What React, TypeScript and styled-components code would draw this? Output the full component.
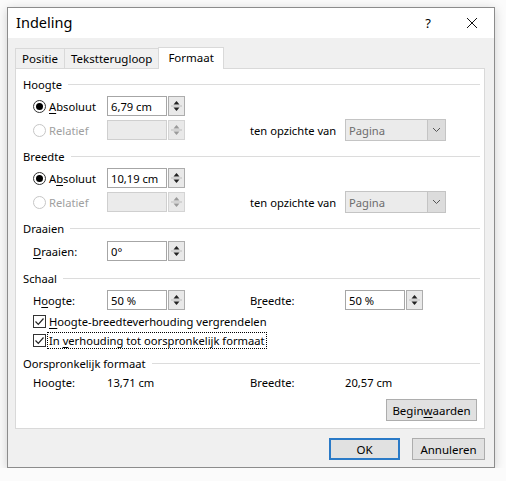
import styled, { createGlobalStyle } from "styled-components";

const Global = createGlobalStyle`
    html, body {
        margin: 0;
        padding: 0;
        background: #fbfbfb;
    }
    #root {
        padding: 7px 0 0 7px;
        font-family: "Noto Sans", "Open Sans", sans-serif;
        font-size: 11.2px;
        color: #000;
    }
`

const Dialog = styled.div`
    width: 486px;
    height: 459px;
    border: 1px solid #8c8c8c;
    background: #f0f0f0;
    display: flex;
    flex-direction: column;
    box-shadow: 0 2px 10px rgba(0,0,0,0.18);
`

const TitleBar = styled.div`
    height: 30px;
    background: #fff;
    display: flex;
    align-items: center;
    padding-left: 8px;
`

const TitleText = styled.div`
    flex: 1;
    font-size: 14.5px;
    padding-bottom: 2px;
`

const TitleButton = styled.div`
    width: 44px;
    height: 30px;
    display: flex;
    align-items: center;
    justify-content: center;
    font-size: 13px;
`

const Body = styled.div`
    flex: 1;
    padding: 7px 9px 0 7px;
    display: flex;
    flex-direction: column;
`

const Tabs = styled.div`
    display: flex;
    align-items: flex-end;
    height: 22px;
    margin-top: 1px;
`

const Tab = styled.div<{ $active?: boolean }>`
    height: ${p => p.$active ? 22 : 20}px;
    box-sizing: border-box;
    padding: 0 ${p => p.$active ? 9 : 6}px;
    border: 1px solid #d9d9d9;
    border-bottom: none;
    margin-right: -1px;
    background: ${p => p.$active ? "#fff" : "#f0f0f0"};
    display: flex;
    align-items: center;
    position: relative;
    z-index: ${p => p.$active ? 2 : 1};
    margin-bottom: ${p => p.$active ? -1 : 0}px;
    padding-bottom: ${p => p.$active ? 2 : 0}px;
    font-size: 11.5px;
`

const Panel = styled.div`
    height: 361px;
    box-sizing: border-box;
    background: #fff;
    border: 1px solid #d9d9d9;
    padding: 5px 4px 0 7px;
    display: flex;
    flex-direction: column;
`

const Group = styled.div<{ $gap?: number }>`
    margin-bottom: ${p => p.$gap ?? 4}px;
`

const Header = styled.div`
    height: 20px;
    display: flex;
    align-items: center;
    &::after {
        content: "";
        flex: 1;
        height: 1px;
        background: #dcdcdc;
        margin-left: 6px;
    }
`

const Row = styled.div<{ $h?: number }>`
    height: ${p => p.$h ?? 24}px;
    display: grid;
    grid-template-columns: 74px 143px 95px 1fr;
    align-items: center;
    padding-left: 10px;
`

const RadioWrap = styled.div<{ $disabled?: boolean }>`
    display: flex;
    align-items: center;
    gap: 3px;
    color: ${p => p.$disabled ? "#a0a0a0" : "#000"};
`

const RadioCircle = styled.span<{ $checked?: boolean; $disabled?: boolean }>`
    width: 13px;
    height: 13px;
    box-sizing: border-box;
    border-radius: 50%;
    border: 1px solid ${p => p.$disabled ? "#c6c6c6" : "#333"};
    display: flex;
    align-items: center;
    justify-content: center;
    &::after {
        content: "";
        width: 7px;
        height: 7px;
        border-radius: 50%;
        background: ${p => p.$checked ? "#000" : "transparent"};
    }
`

const SpinBox = styled.div`
    display: flex;
    gap: 1px;
`

const SpinInput = styled.div<{ $disabled?: boolean }>`
    width: 60px;
    height: 20px;
    box-sizing: border-box;
    border: 1px solid ${p => p.$disabled ? "#cfcfcf" : "#a6a6a6"};
    background: ${p => p.$disabled ? "#ebebeb" : "#fff"};
    padding-left: 3px;
    display: flex;
    align-items: center;
`

const SpinButtons = styled.div<{ $disabled?: boolean }>`
    width: 17px;
    height: 20px;
    box-sizing: border-box;
    border: 1px solid ${p => p.$disabled ? "#d4d4d4" : "#adadad"};
    background: #e9e9e9;
    display: flex;
    flex-direction: column;
    justify-content: center;
    align-items: center;
`

const Select = styled.div`
    width: 101px;
    height: 22px;
    box-sizing: border-box;
    border: 1px solid #c4c4c4;
    background: #ebebeb;
    display: flex;
    align-items: center;
    color: #6d6d6d;
`

const SelectText = styled.div`
    flex: 1;
    padding-left: 3px;
`

const SelectArrow = styled.div`
    width: 17px;
    height: 20px;
    border-left: 1px solid #c4c4c4;
    background: #dcdcdc;
    display: flex;
    align-items: center;
    justify-content: center;
`

const CheckRow = styled.div`
    height: 19px;
    display: flex;
    align-items: center;
    padding-left: 10px;
    gap: 1px;
`

const CheckBox = styled.span`
    width: 13px;
    height: 13px;
    box-sizing: border-box;
    border: 1px solid #333;
    display: flex;
    align-items: center;
    justify-content: center;
    background: #fff;
`

const CheckLabel = styled.span<{ $focus?: boolean }>`
    border: 1px dotted ${p => p.$focus ? "#000" : "transparent"};
    padding: 0 1px;
    line-height: 15px;
`

const U = styled.span`
    text-decoration: underline;
    text-underline-offset: 2px;
`

const ButtonRow = styled.div<{ $pad?: number; $top?: number }>`
    display: flex;
    justify-content: flex-end;
    gap: 12px;
    padding-right: ${p => p.$pad ?? 0}px;
    margin-top: ${p => p.$top ?? 0}px;
`

const Button = styled.div<{ $primary?: boolean; $w: number }>`
    width: ${p => p.$w}px;
    height: 22px;
    box-sizing: border-box;
    border: ${p => p.$primary ? "2px solid #2a7ac7" : "1px solid #adadad"};
    background: #e1e1e1;
    display: flex;
    align-items: center;
    justify-content: center;
    font-size: 11.5px;
`

const Spinner = ({ disabled }: { disabled?: boolean }) => {
    const c = disabled ? "#9a9a9a" : "#222";
    return (
        <SpinButtons $disabled={disabled}>
            <svg width="15" height="18" viewBox="0 0 15 18">
                <path d="M7.5 4 L10.5 7.5 L4.5 7.5 Z" fill={c} />
                <line x1="2" y1="9" x2="13" y2="9" stroke="#bdbdbd" strokeWidth="1" />
                <path d="M7.5 14 L10.5 10.5 L4.5 10.5 Z" fill={c} />
            </svg>
        </SpinButtons>
    );
}

const Spin = ({ value, disabled }: { value?: string; disabled?: boolean }) => (
    <SpinBox>
        <SpinInput $disabled={disabled}>{value}</SpinInput>
        <Spinner disabled={disabled} />
    </SpinBox>
)

const Dropdown = () => (
    <Select>
        <SelectText>Pagina</SelectText>
        <SelectArrow>
            <svg width="9" height="6" viewBox="0 0 9 6">
                <path d="M1 1 L4.5 4.5 L8 1" fill="none" stroke="#555" strokeWidth="1" />
            </svg>
        </SelectArrow>
    </Select>
)

const Radio = ({ checked, disabled, children }: { checked?: boolean; disabled?: boolean; children: React.ReactNode }) => (
    <RadioWrap $disabled={disabled}>
        <RadioCircle $checked={checked} $disabled={disabled} />
        <span>{children}</span>
    </RadioWrap>
)

const Check = ({ focus, children }: { focus?: boolean; children: React.ReactNode }) => (
    <CheckRow>
        <CheckBox>
            <svg width="11" height="11" viewBox="0 0 11 11">
                <path d="M1.5 5.5 L4.3 8.3 L9.5 2.5" fill="none" stroke="#222" strokeWidth="1.2" />
            </svg>
        </CheckBox>
        <CheckLabel $focus={focus}>{children}</CheckLabel>
    </CheckRow>
)

export default function App() {
    return (
        <>
            <Global />
            <Dialog>
                <TitleBar>
                    <TitleText>Indeling</TitleText>
                    <TitleButton>?</TitleButton>
                    <TitleButton>
                        <svg width="12" height="12" viewBox="0 0 12 12">
                            <path d="M1 1 L11 11 M11 1 L1 11" stroke="#111" strokeWidth="1" />
                        </svg>
                    </TitleButton>
                </TitleBar>
                <Body>
                    <Tabs>
                        <Tab>Positie</Tab>
                        <Tab>Tekstterugloop</Tab>
                        <Tab $active>Formaat</Tab>
                    </Tabs>
                    <Panel>
                        <Group>
                            <Header>Hoogte</Header>
                            <Row>
                                <Radio checked><U>A</U>bsoluut</Radio>
                                <Spin value="6,79 cm" />
                            </Row>
                            <Row>
                                <Radio disabled>Relatief</Radio>
                                <Spin disabled />
                                <span>ten opzichte van</span>
                                <Dropdown />
                            </Row>
                        </Group>
                        <Group>
                            <Header>Breedte</Header>
                            <Row>
                                <Radio checked>A<U>b</U>soluut</Radio>
                                <Spin value="10,19 cm" />
                            </Row>
                            <Row>
                                <Radio disabled>Relatief</Radio>
                                <Spin disabled />
                                <span>ten opzichte van</span>
                                <Dropdown />
                            </Row>
                        </Group>
                        <Group>
                            <Header>Draaien</Header>
                            <Row $h={26}>
                                <span><U>D</U>raaien:</span>
                                <Spin value="0°" />
                            </Row>
                        </Group>
                        <Group $gap={3}>
                            <Header>Schaal</Header>
                            <Row>
                                <span>H<U>o</U>ogte:</span>
                                <Spin value="50 %" />
                                <span>B<U>r</U>eedte:</span>
                                <Spin value="50 %" />
                            </Row>
                            <Check><U>H</U>oogte-breedteverhouding vergrendelen</Check>
                            <Check focus>In <U>v</U>erhouding tot oorspronkelijk formaat</Check>
                        </Group>
                        <Group $gap={8}>
                            <Header>Oorspronkelijk formaat</Header>
                            <Row $h={18}>
                                <span>Hoogte:</span>
                                <span>13,71 cm</span>
                                <span>Breedte:</span>
                                <span>20,57 cm</span>
                            </Row>
                        </Group>
                        <ButtonRow $pad={3}>
                            <Button $w={91}>Begin<U>w</U>aarden</Button>
                        </ButtonRow>
                    </Panel>
                    <ButtonRow $top={9}>
                        <Button $primary $w={71}>OK</Button>
                        <Button $w={73}>Annuleren</Button>
                    </ButtonRow>
                </Body>
            </Dialog>
        </>
    );
}
